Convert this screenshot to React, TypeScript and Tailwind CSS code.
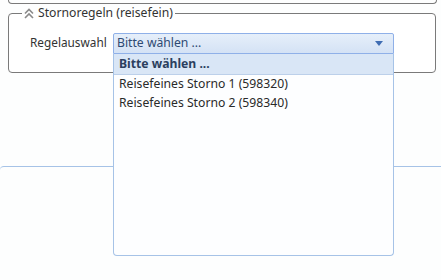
import React from "react";

const font = { fontFamily: '"Noto Sans", "DejaVu Sans", sans-serif' };

function DoubleChevron() {
  return (
    <svg width="10" height="11" viewBox="0 0 10 11" className="shrink-0">
      <path d="M1 5.5 L5 1.5 L9 5.5" fill="none" stroke="#8a8a8a" strokeWidth="1.6" />
      <path d="M1 10 L5 6 L9 10" fill="none" stroke="#8a8a8a" strokeWidth="1.6" />
    </svg>
  );
}

const options = ["Reisefeines Storno 1 (598320)", "Reisefeines Storno 2 (598340)"];

export default function App() {
  return (
    <div className="h-[280px] w-[441px] overflow-hidden bg-[#fdfefe] text-[12.2px] text-[#333]" style={font}>
      {/* previous panel, only its bottom edge shows */}
      <div className="ml-[8px] mr-[4px] h-[4px] rounded-b-[4px] border-x border-b border-[#7a7a7a]" />

      {/* Stornoregeln */}
      <fieldset className="ml-[8px] mr-[5px] mt-[1px] h-[68px] rounded-[4px] border border-[#7a7a7a] bg-white px-[21px]">
        <legend className="-ml-[8px] flex items-center gap-[4px] px-[2px] leading-[16px]">
          <DoubleChevron />
          <span>Stornoregeln (reisefein)</span>
        </legend>
        <div className="mt-[12px] flex items-start">
          <span className="w-[83px] pt-[1px] text-[11.8px] leading-[16px]">Regelauswahl</span>
          <div className="relative z-10 w-[281px]">
            <div className="flex h-[21px] items-center justify-between rounded-t-[2px] border border-[#8fb0e8] bg-gradient-to-b from-[#e6effa] to-[#d4e2f5] pl-[3px] pr-[10px] text-[#2e4a73]">
              <span>Bitte wählen ...</span>
              <svg width="8" height="5" viewBox="0 0 8 5">
                <path d="M0 0 H8 L4 5 Z" fill="#3f6db3" />
              </svg>
            </div>
            <ul className="absolute left-0 top-full h-[202px] w-full rounded-b-[4px] border border-t-0 border-[#a6c3e7] bg-[#fdfeff]">
              <li className="flex h-[21px] items-center border-b border-[#bcd0ea] bg-[#d9e6f6] pl-[5px] font-bold text-[#2b3f5e]">
                Bitte wählen ...
              </li>
              {options.map((o) => (
                <li key={o} className="flex h-[19px] items-center pl-[5px] text-[#2a2a2a]">
                  {o}
                </li>
              ))}
            </ul>
          </div>
        </div>
      </fieldset>

      {/* tab panel below */}
      <div className="mt-[93px] h-[120px] rounded-tl-[4px] border-t border-[#a6c3e7]" />
    </div>
  );
}
